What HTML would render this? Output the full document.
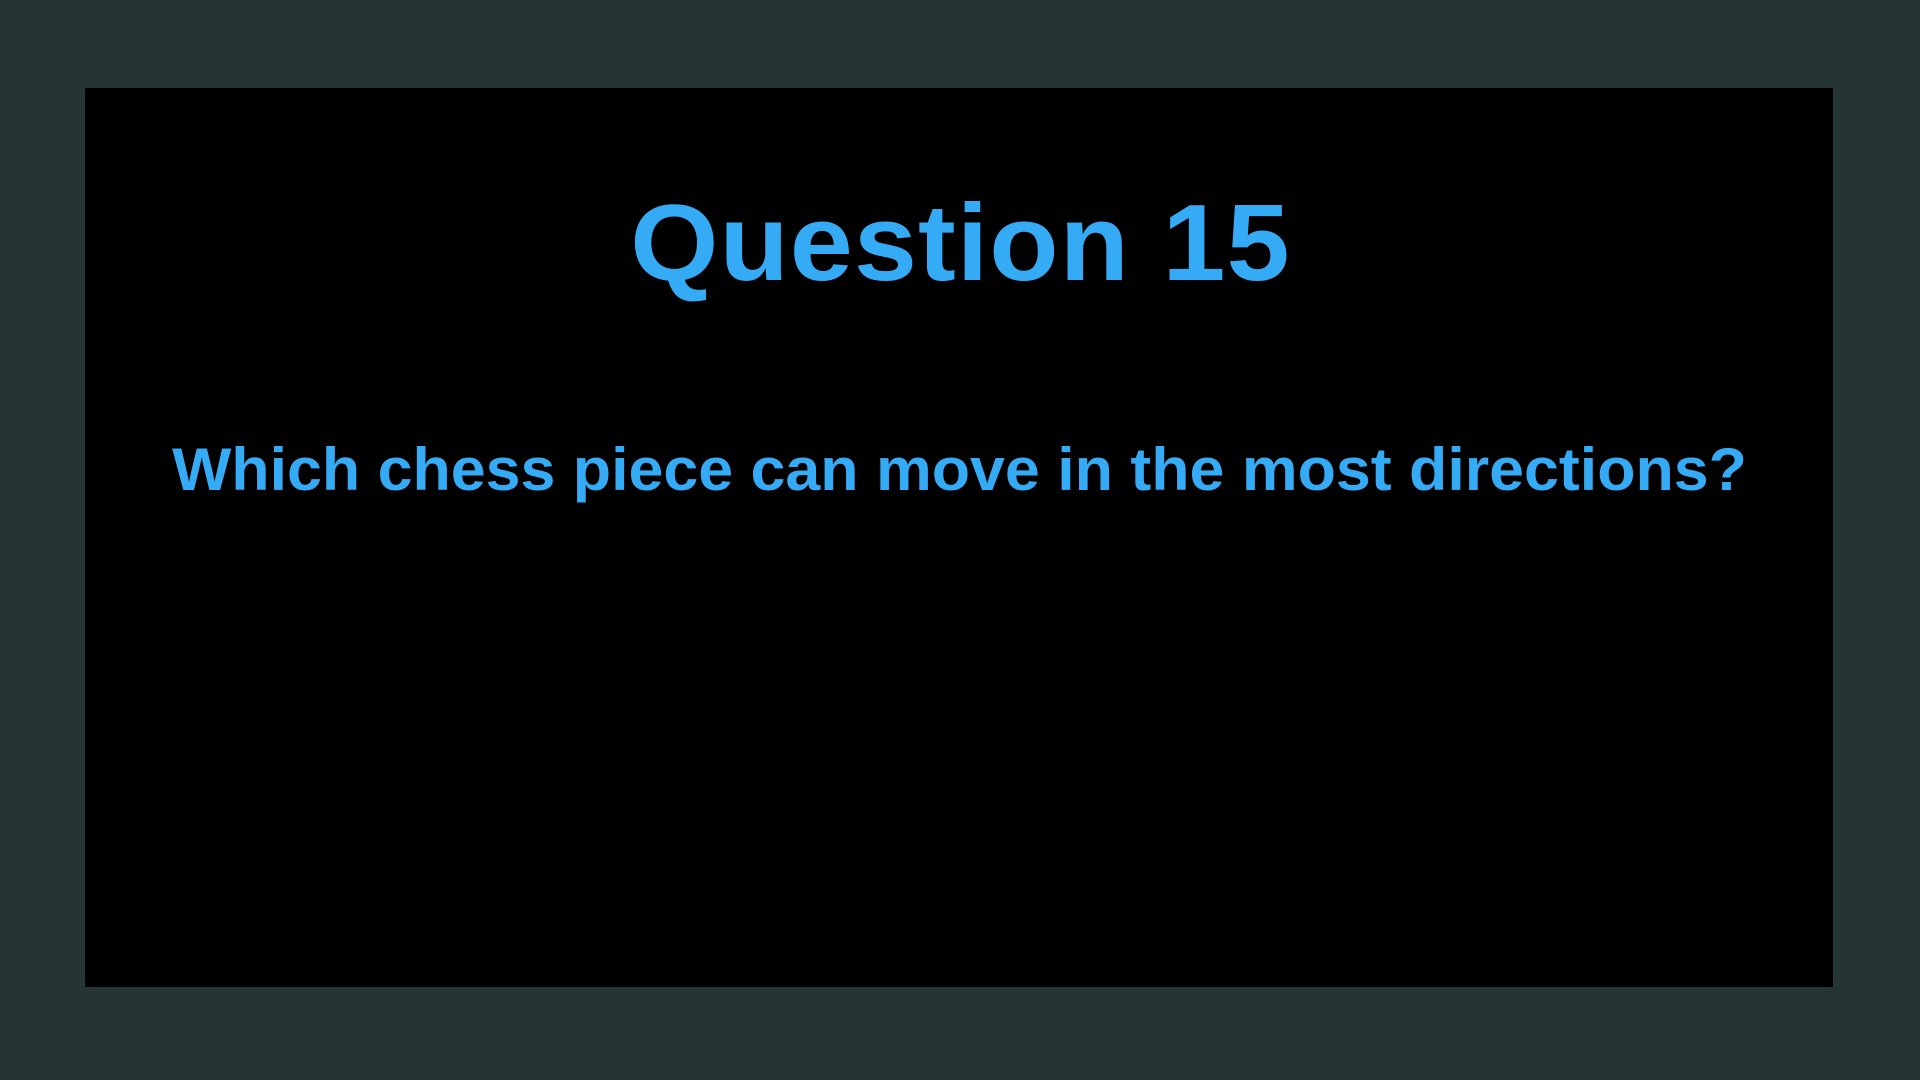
<!DOCTYPE html>
<html><head><meta charset="utf-8"><style>
html,body{margin:0;padding:0;width:1920px;height:1080px;background:#253435;overflow:hidden}
.box{position:absolute;left:85px;top:88px;width:1748px;height:899px;background:#000}
.t{position:absolute;left:0;width:1920px;text-align:center;color:#36abf5;font-family:"Liberation Sans",sans-serif;font-weight:bold;white-space:nowrap}
.t span{display:inline-block}
#a{top:173px;font-size:109px;line-height:140px}
#a span{transform:scaleX(1.04);letter-spacing:1px}
#b{top:430px;font-size:60px;line-height:80px}
#b span{transform:scaleX(1.045)}
</style></head><body>
<div class="box"></div>
<div class="t" id="a"><span>Question 15</span></div>
<div class="t" id="b"><span>Which chess piece can move in the most directions?</span></div>
</body></html>
